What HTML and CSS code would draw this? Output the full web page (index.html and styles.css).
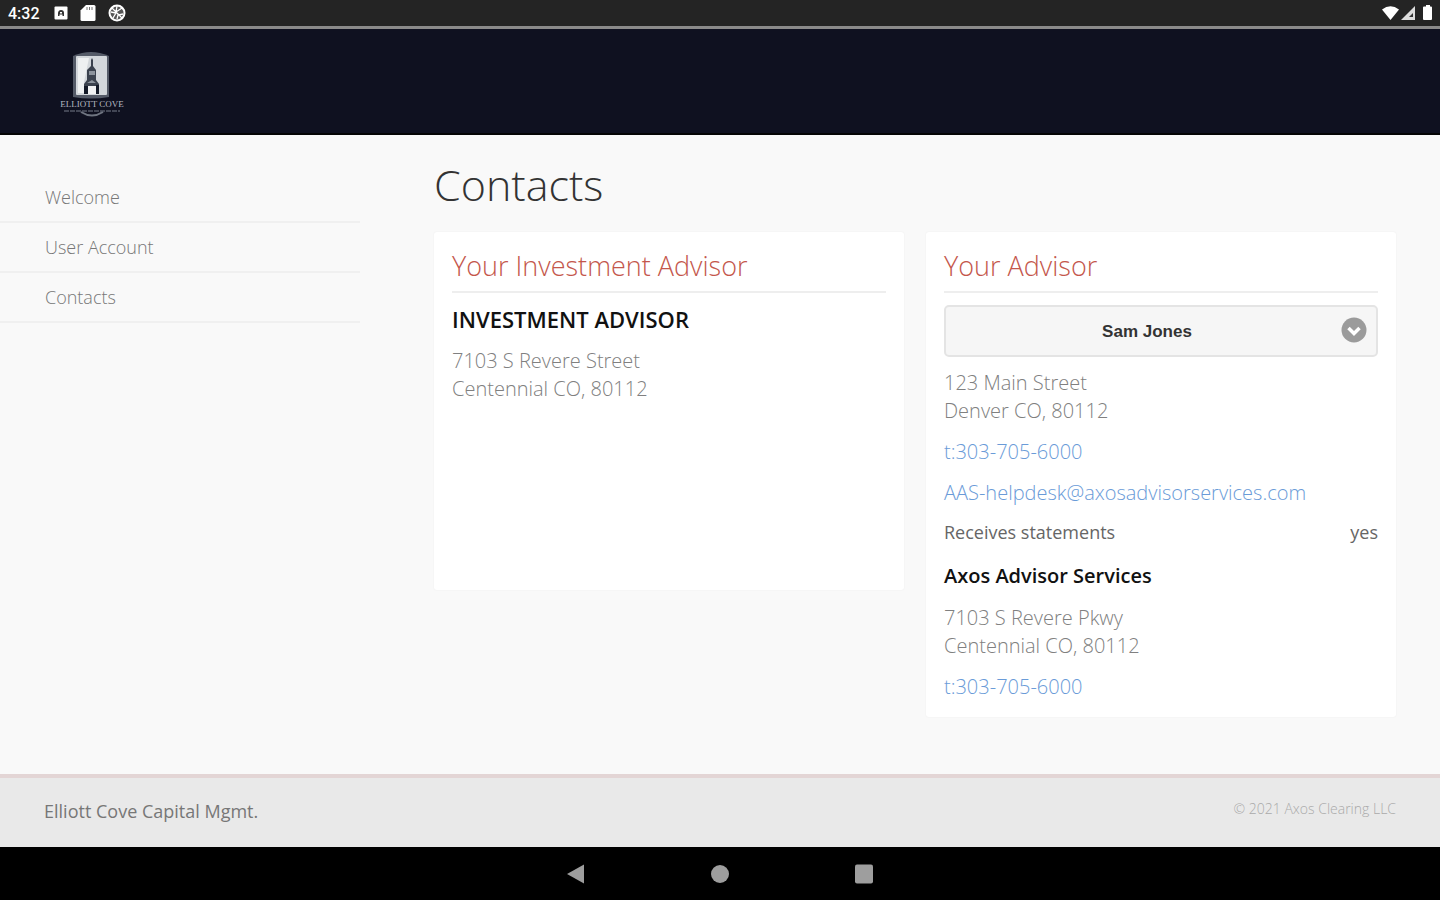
FILE: index.html
```html
<!DOCTYPE html>
<html lang="en">
<head>
    <meta charset="UTF-8">
    <meta name="viewport" content="width=device-width, initial-scale=1.0">
    <title>Contacts</title>
    <link rel="stylesheet" href="styles.css">
</head>
<body>
    <div class="status-bar">
        <div class="status-left">
            <span class="clock">4:32</span>
            <svg width="14" height="14" viewBox="0 0 14 14">
                <rect x="0.5" y="0.5" width="13" height="13" rx="1" fill="#fff"/>
                <path d="M4 10V7.500Q4 4 7 4t3 3v3H8.500V8.500h-3V10z" fill="#333"/>
                <rect x="6" y="6" width="2" height="1.500" fill="#fff"/>
            </svg>
            <svg width="16" height="16" viewBox="0 0 16 16">
                <path d="M6 0h8q1.500 0 1.500 1.500v13q0 1.500-1.500 1.500H2q-1.500 0-1.500-1.500V5.500z" fill="#fff"/>
                <path d="M7 2v3M9.500 2v3M12 2v3" stroke="#777" stroke-width="1"/>
            </svg>
            <svg width="18" height="18" viewBox="0 0 18 18">
                <circle cx="9" cy="9" r="7.500" fill="#555" stroke="#fff" stroke-width="2"/>
                <path d="M4 4l10 10M9 2l-1 6 6-4M3 8l5 1-3 5M9 15l1-4 5-1" fill="none" stroke="#fff" stroke-width="1.300"/>
            </svg>
        </div>
        <div class="status-right">
            <svg width="50" height="16" viewBox="0 0 50 16">
                <path d="M0 4.500Q8.500-2 17 4.500L8.500 15z" fill="#fff"/>
                <path d="M19 15L33 1v14z" fill="#ddd"/>
                <path d="M27 12l4-4v4z" fill="#333"/>
                <path d="M42 1.500h2V0h4v1.500h1q1 0 1 1V14q0 1-1 1h-7q-1 0-1-1V2.500q0-1 1-1z" fill="#fff"/>
            </svg>
        </div>
    </div>

    <header class="header">
        <a href="#" class="logo" aria-label="Elliott Cove">
            <svg width="68" height="68" viewBox="0 0 68 68">
                <path d="M15 5Q33-3 51 5v41Q33 49 15 46z" fill="#555b68"/>
                <rect x="18" y="5" width="31" height="39" rx="1" fill="#d3d7db"/>
                <path d="M20 7h11L26 31v11h-6z" fill="#eef0f1"/>
                <path d="M33 9l1-2 1 2v6l3 4v10l3 4v10H26V33l3-4V19l4-4z" fill="#3b424e"/>
                <path d="M31 20h6v4h-6zM29 32l5-3 4 3z" fill="#8c939c"/>
                <rect x="29" y="35" width="9" height="8" fill="#f1f2f3"/>
                <path d="M26 35h4v8h-4zM38 34h3v9h-3z" fill="#141a28"/>
                <text x="34" y="56" text-anchor="middle" class="logo-name">ELLIOTT COVE</text>
                <path d="M6 60h56" stroke="#777d89" stroke-width="1" stroke-dasharray="5 1"/>
                <path d="M23 61q11 7 22 0" fill="none" stroke="#6f7581" stroke-width="2"/>
            </svg>
        </a>
    </header>

    <div class="container">
        <nav class="sidebar">
            <a href="#">Welcome</a>
            <a href="#">User Account</a>
            <a href="#">Contacts</a>
        </nav>

        <main class="content">
            <h1>Contacts</h1>
            <div class="cards">
                <section class="card">
                    <h2>Your Investment Advisor</h2>
                    <h3 class="role">INVESTMENT ADVISOR</h3>
                    <p>7103 S Revere Street<br>Centennial CO, 80112</p>
                </section>

                <section class="card">
                    <h2>Your Advisor</h2>
                    <div class="select-wrap">
                        <select id="advisor-select" aria-label="Your Advisor">
                            <option>Sam Jones</option>
                        </select>
                        <svg class="select-icon" width="26" height="26" viewBox="0 0 26 26">
                            <circle cx="13" cy="13" r="12.500" fill="#9b9b9b"/>
                            <path d="M7.500 11l5.500 5.500 5.500-5.500" fill="none" stroke="#fff" stroke-width="3.500"/>
                        </svg>
                    </div>
                    <p>123 Main Street<br>Denver CO, 80112</p>
                    <p><a href="tel:303-705-6000">t:303-705-6000</a></p>
                    <p><a href="mailto:AAS-helpdesk@axosadvisorservices.com">AAS-helpdesk@axosadvisorservices.com</a></p>
                    <div class="statement-row">
                        <span>Receives statements</span>
                        <span>yes</span>
                    </div>
                    <h3>Axos Advisor Services</h3>
                    <p>7103 S Revere Pkwy<br>Centennial CO, 80112</p>
                    <p><a href="tel:303-705-6000">t:303-705-6000</a></p>
                </section>
            </div>
        </main>
    </div>

    <footer class="footer">
        <span class="company">Elliott Cove Capital Mgmt.</span>
        <span class="copyright">© 2021 Axos Clearing LLC</span>
    </footer>

    <div class="nav-bar">
        <button aria-label="Back">
            <svg width="20" height="20" viewBox="0 0 20 20"><path d="M1 10L18 0.500v19z" fill="#9e9e9e"/></svg>
        </button>
        <button aria-label="Home">
            <svg width="20" height="20" viewBox="0 0 20 20"><circle cx="10" cy="10" r="9" fill="#9e9e9e"/></svg>
        </button>
        <button aria-label="Recent apps">
            <svg width="20" height="20" viewBox="0 0 20 20"><rect x="1" y="0.500" width="18" height="19" rx="2" fill="#9e9e9e"/></svg>
        </button>
    </div>
</body>
</html>
```

FILE: styles.css
```css
* { margin: 0; padding: 0; box-sizing: border-box; }
body { display: flex; flex-direction: column; min-height: 100vh; font-family: 'Open Sans', sans-serif; font-weight: 300; background: #f9f9f9; color: #555; }
a { text-decoration: none; }
svg { display: block; }

/* Device status bar */
.status-bar { display: flex; justify-content: space-between; align-items: center; height: 29px; padding: 0 8px; background: #242424; border-bottom: 3px solid #8a8a8a; }
.status-left { display: flex; align-items: center; gap: 12px; }
.clock { width: 34px; font-family: Roboto, sans-serif; font-size: 16px; font-weight: 500; color: #fff; }

.header { padding: 22px 58px 14px; background: #0f1120; border-bottom: 2px solid #050505; }
.logo { display: inline-block; vertical-align: top; }
.logo-name { font-family: 'Liberation Serif', serif; font-size: 9px; fill: #b4b8c0; }

.container { display: flex; flex: 1; }
.sidebar { width: 25%; padding-top: 38px; }
.sidebar a { display: block; padding: 12px 45px; border-bottom: 2px solid #f0f0f0; font-size: 18px; line-height: 24px; color: #777; }
.content { flex: 1; padding: 20px 44px 57px 74px; }
h1 { margin-bottom: 17px; font-size: 43px; font-weight: 300; line-height: 60px; color: #333; }
.cards { display: grid; grid-template-columns: 1fr 1fr; align-items: start; gap: 22px; }
.card { min-height: 358px; padding: 17px 18px 16px; background: #fff; border-radius: 3px; box-shadow: 0 0 2px rgba(0,0,0,0.06); }
h2 { margin-bottom: 12px; padding-bottom: 9px; border-bottom: 2px solid #eee; font-size: 27px; font-weight: 300; line-height: 33px; color: #c4574c; }
h3 { margin-bottom: 14px; font-size: 20px; font-weight: 600; line-height: 28px; color: #111; }
.role { font-size: 22px; }
.card p { margin-bottom: 13px; font-size: 20px; line-height: 28px; color: #808080; }
.card p:last-child { margin-bottom: 0; }
.card p a { color: #6a9bd8; }

.select-wrap { position: relative; margin-bottom: 12px; }
.select-wrap select { width: 100%; height: 52px; padding: 0 44px 0 16px; appearance: none; background: #f6f6f6; border: 2px solid #e4e4e4; border-radius: 5px; font-family: 'Liberation Sans', sans-serif; font-size: 17px; font-weight: 700; text-align: center; text-align-last: center; color: #333; }
.select-icon { position: absolute; top: 12px; right: 11px; pointer-events: none; }
.statement-row { display: flex; justify-content: space-between; margin-bottom: 18px; font-size: 18px; font-weight: 400; line-height: 24px; color: #666; }

.footer { display: flex; justify-content: space-between; padding: 19px 44px 22px; background: #e9e9e9; border-top: 4px solid #e3d5d5; }
.company { font-size: 18px; font-weight: 400; line-height: 28px; color: #777; }
.copyright { font-size: 14px; line-height: 24px; color: #aaa; }

/* Device navigation bar */
.nav-bar { display: flex; justify-content: center; align-items: center; gap: 124px; height: 53px; background: #000; }
.nav-bar button { background: none; border: none; cursor: pointer; }
```
